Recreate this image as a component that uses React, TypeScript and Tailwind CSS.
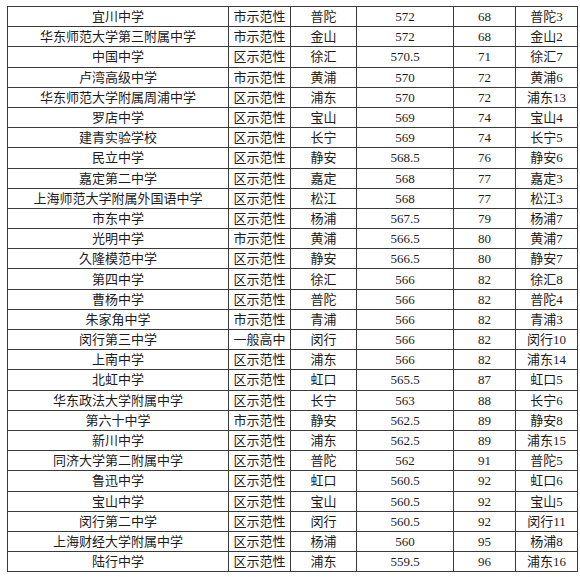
const rows: string[][] = [
  ["宜川中学", "市示范性", "普陀", "572", "68", "普陀3"],
  ["华东师范大学第三附属中学", "市示范性", "金山", "572", "68", "金山2"],
  ["中国中学", "区示范性", "徐汇", "570.5", "71", "徐汇7"],
  ["卢湾高级中学", "市示范性", "黄浦", "570", "72", "黄浦6"],
  ["华东师范大学附属周浦中学", "区示范性", "浦东", "570", "72", "浦东13"],
  ["罗店中学", "区示范性", "宝山", "569", "74", "宝山4"],
  ["建青实验学校", "区示范性", "长宁", "569", "74", "长宁5"],
  ["民立中学", "区示范性", "静安", "568.5", "76", "静安6"],
  ["嘉定第二中学", "区示范性", "嘉定", "568", "77", "嘉定3"],
  ["上海师范大学附属外国语中学", "区示范性", "松江", "568", "77", "松江3"],
  ["市东中学", "区示范性", "杨浦", "567.5", "79", "杨浦7"],
  ["光明中学", "市示范性", "黄浦", "566.5", "80", "黄浦7"],
  ["久隆模范中学", "区示范性", "静安", "566.5", "80", "静安7"],
  ["第四中学", "区示范性", "徐汇", "566", "82", "徐汇8"],
  ["曹杨中学", "区示范性", "普陀", "566", "82", "普陀4"],
  ["朱家角中学", "市示范性", "青浦", "566", "82", "青浦3"],
  ["闵行第三中学", "一般高中", "闵行", "566", "82", "闵行10"],
  ["上南中学", "区示范性", "浦东", "566", "82", "浦东14"],
  ["北虹中学", "区示范性", "虹口", "565.5", "87", "虹口5"],
  ["华东政法大学附属中学", "区示范性", "长宁", "563", "88", "长宁6"],
  ["第六十中学", "市示范性", "静安", "562.5", "89", "静安8"],
  ["新川中学", "区示范性", "浦东", "562.5", "89", "浦东15"],
  ["同济大学第二附属中学", "区示范性", "普陀", "562", "91", "普陀5"],
  ["鲁迅中学", "区示范性", "虹口", "560.5", "92", "虹口6"],
  ["宝山中学", "区示范性", "宝山", "560.5", "92", "宝山5"],
  ["闵行第二中学", "区示范性", "闵行", "560.5", "92", "闵行11"],
  ["上海财经大学附属中学", "区示范性", "杨浦", "560", "95", "杨浦8"],
  ["陆行中学", "区示范性", "浦东", "559.5", "96", "浦东16"],
]

const widths = ["w-[221px]", "w-[62px]", "w-[66px]", "w-[97px]", "w-[62px]", "w-[62px]"]

export default function App() {
  return (
    <div className="bg-white w-[580px] h-[577px] pt-[6px] pl-[7px]">
      <table
        className="border-collapse table-fixed text-[13px] text-[#1c1c1c]"
        style={{ fontFamily: '"Liberation Serif", "Noto Sans CJK SC", serif' }}
      >
        <colgroup>
          {widths.map((w, i) => (
            <col key={i} className={w} />
          ))}
        </colgroup>
        <tbody>
          {rows.map((r, i) => (
            <tr key={i} className="h-[20.2px]">
              {r.map((c, j) => (
                <td
                  key={j}
                  className="border border-[#3a3a3a] text-center align-middle p-0 leading-none whitespace-nowrap"
                >
                  {c}
                </td>
              ))}
            </tr>
          ))}
        </tbody>
      </table>
    </div>
  )
}
